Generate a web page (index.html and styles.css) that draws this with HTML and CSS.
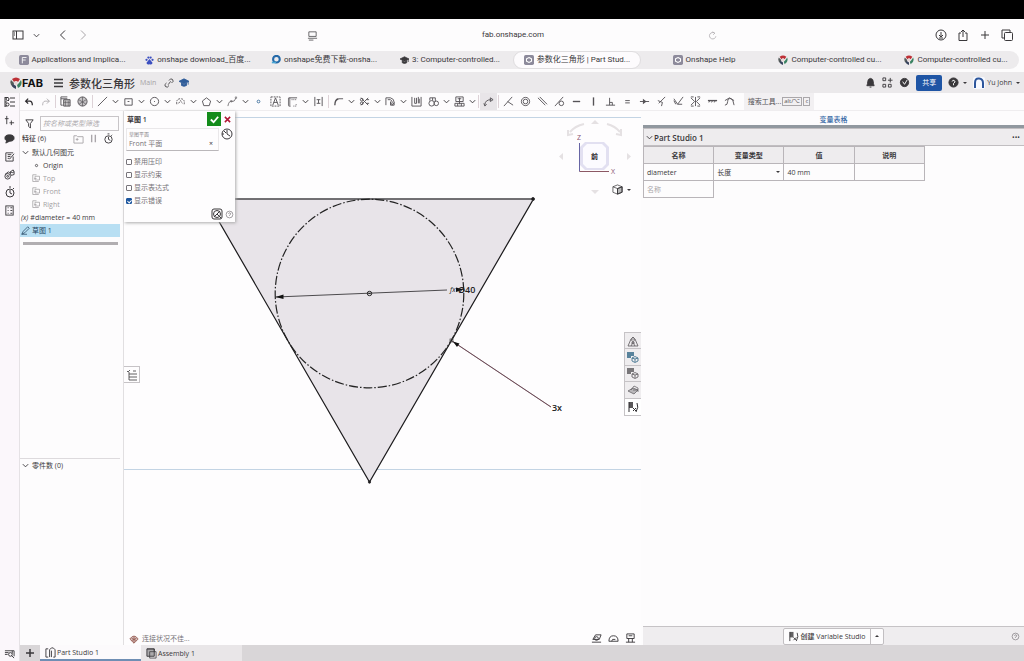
FILE: index.html
```html
<!DOCTYPE html>
<html lang="zh-CN">
<head>
<meta charset="utf-8">
<title>参数化三角形 | Part Studio 1</title>
<link rel="stylesheet" href="styles.css">
</head>
<body>
<svg class="defs" aria-hidden="true">
  <symbol id="chev" viewBox="0 0 10 10"><path d="M2 3.500 5 6.500 8 3.500"/></symbol>
  <symbol id="tree" viewBox="0 0 12 12"><path d="M1 1.500h3M1 1v10M1 6h2M1 10h2M6 2h5M6 6h5M6 10h5M4 4l1 1"/><circle cx="3.500" cy="3" r="1.500"/><circle cx="3.500" cy="8.500" r="1.500"/></symbol>
  <symbol id="part" viewBox="0 0 12 12"><path d="M3.500 2H1v9h2.500M5 11V3l2-2h2l2 2v8H9M7 11V4"/></symbol>
  <symbol id="cube" viewBox="0 0 12 12"><path class="shade" d="M6 5l5-2v6l-5 2z"/><path d="M1 3l5-2 5 2v6l-5 2-5-2zM1 3l5 2 5-2M6 5v6" stroke-width="0.800"/></symbol>
  <symbol id="tcube" viewBox="0 0 12 12"><path class="solid" stroke="none" d="M0 1h7v4H4v2H0z"/><path d="M5 7l3-1.500L11 7v3l-3 1.500L5 10zM5 7l3 1 3-1M8 8v3" stroke-width="0.800"/></symbol>
  <symbol id="vars" viewBox="0 0 12 12"><path class="solid" stroke="none" d="M2 1h4v6H2z"/><path d="M2 1v10M10 2q2 4-1 9M6 7l3 3M9 7l-3 3"/></symbol>
  <symbol id="oicon" viewBox="0 0 12 12"><rect x="0" y="0" width="12" height="12" rx="2" fill="#8d8a9b" stroke="none"/><path d="M6 3l3 1.500v3L6 9 3 7.500v-3z" stroke="#fff" stroke-width="1.300"/></symbol>
  <symbol id="fab" viewBox="0 0 12 12"><g stroke="none"><path d="M2 2Q6-1 10 2L8 5Q6 3 4 5z" fill="#bd3036"/><path d="M1 3L4 6l-1 4Q-1 7 1 3z" fill="#555b5b"/><path d="M11 3Q13 8 8 11L7 8l2-2z" fill="#3a8262"/><path d="M3 7l3 2v3Q3 11 2 9z" fill="#39445e"/><circle cx="6" cy="6" r="1.800" fill="#e8d8d8"/></g></symbol>
  <symbol id="cap" viewBox="0 0 12 12"><path d="M0 4l6-3 6 3-6 3z" fill="currentColor"/><path d="M3 6v3q3 2 6 0V6L6 8z" fill="currentColor"/><path d="M11 4v4"/></symbol>
  <symbol id="clock" viewBox="0 0 12 12"><circle cx="6" cy="7" r="4"/><path d="M6 4v3l2 1M5 1h2M9 3l1-1"/></symbol>
  <symbol id="plane" viewBox="0 0 12 12"><path d="M1 1h5M1 1v9h8M4 3h6v5H4zM3 6h3"/></symbol>
  <symbol id="help" viewBox="0 0 12 12"><circle cx="6" cy="6" r="4.500"/><path d="M4.500 5Q5 3 7 4t-1 3v1"/></symbol>
</svg>

<div class="device-bar"></div>

<header class="browser-bar">
  <div class="group nav">
    <button aria-label="侧边栏"><svg class="i12" viewBox="0 0 12 12"><rect x="1" y="2" width="10" height="8"/><path d="M4.500 2v8M2 4h1M2 6h1"/></svg></button>
    <button aria-label="标签组"><svg class="i9"><use href="#chev"/></svg></button>
    <button class="back" aria-label="后退"><svg class="i12" viewBox="0 0 12 12"><path d="M8 1.500 3.500 6 8 10.500"/></svg></button>
    <button class="dim" aria-label="前进"><svg class="i12" viewBox="0 0 12 12"><path d="M4 1.500 8.500 6 4 10.500"/></svg></button>
  </div>
  <div class="address">
    <svg class="i11" viewBox="0 0 12 12"><path d="M2 2h8v5H2zM1 9h10M2 11h5" stroke-width="0.800"/></svg>
    <span>fab.onshape.com</span>
    <button class="dim" aria-label="重新载入"><svg class="i9" viewBox="0 0 12 12"><path d="M9 3a4.300 4.300 0 1 0 1.500 4M6 1l3 2-2 2"/></svg></button>
  </div>
  <div class="group actions">
    <button aria-label="下载"><svg class="i12" viewBox="0 0 12 12"><circle cx="6" cy="6" r="5"/><path d="M6 3v5M4 6l2 2 2-2M4 9h4"/></svg></button>
    <button aria-label="共享网页"><svg class="i12" viewBox="0 0 12 12"><path d="M4 4H2v7.500h8V4H8M6 8V1M4 3l2-2 2 2"/></svg></button>
    <button aria-label="新标签"><svg class="i12" viewBox="0 0 12 12"><path d="M6 2v8M2 6h8"/></svg></button>
    <button aria-label="标签概览"><svg class="i12" viewBox="0 0 12 12"><rect x="3.500" y="3.500" width="8" height="8" rx="1"/><path d="M3 9H1V1h8v2"/></svg></button>
  </div>
</header>

<nav class="tabs" aria-label="浏览器标签">
  <a href="#t1"><svg class="i10" viewBox="0 0 12 12"><rect width="12" height="12" rx="2" fill="#8d8a9b" stroke="none"/><path d="M4 10V3h5M4 6h4" stroke="#fff"/></svg><span>Applications and Implica...</span></a>
  <a href="#t2"><svg class="i9" viewBox="0 0 12 12"><g fill="#3c4fc0" stroke="none"><circle cx="2" cy="5" r="1.500"/><circle cx="4.500" cy="2" r="1.500"/><circle cx="7.500" cy="2" r="1.500"/><circle cx="10" cy="5" r="1.500"/><path d="M6 4l4 5q0 3-4 2-4 1-4-2z"/></g></svg><span>onshape download_百度...</span></a>
  <a href="#t3"><svg class="i10" viewBox="0 0 12 12"><circle cx="6.500" cy="5" r="4" stroke="#2469a8" stroke-width="2.500"/><path d="M1 8h5v2H1z" fill="#49a6d5" stroke="none"/></svg><span>onshape免费下载-onsha...</span></a>
  <a href="#t4"><svg class="i9"><use href="#cap"/></svg><span>3: Computer-controlled...</span></a>
  <a href="#t5" class="active"><svg class="i10"><use href="#oicon"/></svg><span>参数化三角形 | Part Stud...</span></a>
  <a href="#t6"><svg class="i10"><use href="#oicon"/></svg><span>Onshape Help</span></a>
  <a href="#t7"><svg class="i10"><use href="#fab"/></svg><span>Computer-controlled cu...</span></a>
  <a href="#t8"><svg class="i10"><use href="#fab"/></svg><span>Computer-controlled cu...</span></a>
</nav>

<header class="appbar">
  <div class="brand"><svg class="i12"><use href="#fab"/></svg><b>FAB</b></div>
  <button aria-label="菜单"><svg class="i12 bold" viewBox="0 0 12 12"><path d="M2 2.500h9M2 6h9M2 9.500h9"/></svg></button>
  <h1>参数化三角形</h1>
  <span class="branch">Main</span>
  <button aria-label="链接"><svg class="i10" viewBox="0 0 12 12"><path d="M5 8 8 4M6 3l2-2q3 0 3 3L9 6M3 6 1 8q0 3 3 3l2-2"/></svg></button>
  <a class="learn" href="#learn" aria-label="学习中心"><svg class="i10"><use href="#cap"/></svg></a>
  <div class="account">
    <button aria-label="通知"><svg class="i11" viewBox="0 0 12 12"><path d="M2 9.500q1-2 1-4.500 0-3 3-3.500 3 .5 3 3.500 0 2.500 1 4.500zM5 11h2" fill="currentColor"/></svg></button>
    <button aria-label="应用"><svg class="i11" viewBox="0 0 12 12"><path d="M1 1h3v3H1zM1 8h3v3H1zM7 8h3v3H7zM9 1v5M6.500 3.500h5"/></svg></button>
    <button aria-label="导航"><svg class="i11" viewBox="0 0 12 12"><circle cx="6" cy="6" r="4.500" fill="currentColor"/><path d="M4 5l2 3 3-5" stroke="#fff"/></svg></button>
    <button class="share">共享</button>
    <button aria-label="帮助"><svg class="i11" viewBox="0 0 12 12"><circle cx="6" cy="6" r="5" fill="currentColor"/><path d="M4.500 5Q5 2.500 7 4t-1 3v2" stroke="#fff"/></svg></button>
    <span class="caret"></span>
    <button class="user"><svg class="i12" viewBox="0 0 12 12"><rect width="12" height="12" rx="2" fill="#f7f9ff" stroke="none"/><path d="M2 11V6Q2 1 6 1.500T10 6v5" stroke="#2c559c" stroke-width="2"/></svg><span>Yu John</span></button>
    <span class="caret"></span>
  </div>
</header>

<div class="workspace">
  <aside class="rail" aria-label="侧栏">
    <button aria-label="特征列表"><svg class="i12"><use href="#tree"/></svg></button>
    <button aria-label="添加"><svg class="i11" viewBox="0 0 12 12"><path d="M3 1v9M1 4h4M8 6v5M6 8.500h5"/></svg></button>
    <button aria-label="评论"><svg class="i11" viewBox="0 0 12 12"><ellipse cx="6" cy="5.500" rx="5" ry="3.500" fill="currentColor"/><path d="M3 8l-1 3 4-2" fill="currentColor"/></svg></button>
    <button aria-label="笔记"><svg class="i11" viewBox="0 0 12 12"><path d="M10 6v5H2V2h8M4 4h4M4 6h3M4 8h2M6 9l5-6"/></svg></button>
    <button aria-label="零件"><svg class="i11" viewBox="0 0 12 12"><circle cx="4" cy="8" r="3"/><circle cx="4" cy="8" r="1"/><path d="M1 6l4-3 2 2M7 3l3-2 1 2v3L8 7 7 5zM7 3l2 1 2-1"/></svg></button>
    <button aria-label="历史"><svg class="i12"><use href="#clock"/></svg></button>
    <button aria-label="表格"><svg class="i11" viewBox="0 0 12 12"><rect x="2" y="1" width="8" height="10"/><path d="M4 3h1M7 3h2M4 6h1M7 6h2M4 9h1M7 9h2"/></svg></button>
    <button class="last" aria-label="标签管理"><svg class="i11" viewBox="0 0 12 12"><path d="M1 3h10v6M1 5h4M1 7h3M9 3v3M8 8l3 3"/><circle cx="7" cy="7" r="2"/></svg></button>
  </aside>

  <div class="work">
    <div class="toolbar" role="toolbar" aria-label="草图工具">
      <button class="strong" aria-label="撤销"><svg class="i10 bold" viewBox="0 0 12 12"><path d="M5 2 2 5l3 3M2 5h5q3 0 3 5"/></svg></button>
      <button class="dim" aria-label="重做"><svg class="i10" viewBox="0 0 12 12"><path d="M7 2l3 3-3 3M10 5H5Q2 5 2 10"/></svg></button>
      <i class="sep"></i>
      <button aria-label="复制"><svg class="i11" viewBox="0 0 12 12"><path d="M8 1H1v9h2M1 3h7"/><path class="shade" d="M4 4h7v7H4z"/><path d="M6 5v6M9 5v6M4 7h7" stroke-width="0.600"/></svg></button>
      <button aria-label="材料"><svg class="i11" viewBox="0 0 12 12"><circle class="shade" cx="6" cy="6" r="5"/><path d="M6 1v10M2 4l8 5M2 9l8-5" stroke-width="0.700"/></svg></button>
      <i class="sep"></i>
      <button aria-label="直线"><svg class="i11" viewBox="0 0 12 12"><path d="M1 11 11 1"/></svg></button><button class="more" aria-label="更多直线"><svg class="i9"><use href="#chev"/></svg></button>
      <button aria-label="矩形"><svg class="i11" viewBox="0 0 12 12"><path d="M2 3h8v7H2z"/><path d="M5 6h2"/></svg></button><button class="more" aria-label="更多矩形"><svg class="i9"><use href="#chev"/></svg></button>
      <button aria-label="圆"><svg class="i11" viewBox="0 0 12 12"><circle cx="6" cy="6" r="4.500"/><path d="M5.500 6h1"/></svg></button><button class="more" aria-label="更多圆"><svg class="i9"><use href="#chev"/></svg></button>
      <button aria-label="圆弧"><svg class="i11" viewBox="0 0 12 12"><path d="M2 9Q1 3 6 3t4 6M4 8l2-3 2 3" stroke-dasharray="2 1"/></svg></button><button class="more" aria-label="更多圆弧"><svg class="i9"><use href="#chev"/></svg></button>
      <button aria-label="多边形"><svg class="i11" viewBox="0 0 12 12"><path d="M6 2l4.500 3.500L9 10.500H3L1.500 5.500z"/></svg></button><button class="more" aria-label="更多多边形"><svg class="i9"><use href="#chev"/></svg></button>
      <button aria-label="样条"><svg class="i11" viewBox="0 0 12 12"><path d="M1 11q1-6 4-5t5-4" stroke-width="0.800"/><path d="M9 1h1.500v1.500H9zM4 5h1.500v1.500H4z" stroke-width="0.600"/></svg></button><button class="more" aria-label="更多样条"><svg class="i9"><use href="#chev"/></svg></button>
      <button aria-label="点"><svg class="i11" viewBox="0 0 12 12"><circle cx="6" cy="6" r="1.500" stroke="#41719d"/></svg></button>
      <button aria-label="文字"><svg class="i11" viewBox="0 0 12 12"><rect x="1" y="1" width="10" height="10" stroke-dasharray="2 1"/><path d="M3 10 6 2l3 8M4 7h4"/></svg></button>
      <button aria-label="投影"><svg class="i11" viewBox="0 0 12 12"><path d="M11 2H2v9h2"/><path class="shade" d="M1 2h3v8H1z" stroke="none"/><path d="M5 4h5M10 9v2H6" stroke-dasharray="1 1"/></svg></button><button class="more" aria-label="更多投影"><svg class="i9"><use href="#chev"/></svg></button>
      <button aria-label="镜像"><svg class="i11" viewBox="0 0 12 12"><path d="M2 1v10M10 1v10M4 4h4M4 8h4M6 4v4"/></svg></button>
      <i class="sep"></i>
      <button aria-label="圆角"><svg class="i11" viewBox="0 0 12 12"><path class="bold" d="M2 10q0-6 4-7"/><path d="M6 3h5"/></svg></button><button class="more" aria-label="更多圆角"><svg class="i9"><use href="#chev"/></svg></button>
      <button aria-label="修剪"><svg class="i11" viewBox="0 0 12 12"><path d="M2 2l8 8M10 2 2 10"/><circle cx="3" cy="4" r="1.500"/><circle cx="3" cy="8" r="1.500"/><path d="M8 4h3M8 8h3"/></svg></button><button class="more" aria-label="更多修剪"><svg class="i9"><use href="#chev"/></svg></button>
      <button aria-label="偏移"><svg class="i11" viewBox="0 0 12 12"><path d="M1 10V2h5q4 1 4 5v3H6V6M3 4h3q2 1 2 4M6 7l2 3 2-3"/></svg></button><button class="more" aria-label="更多偏移"><svg class="i9"><use href="#chev"/></svg></button>
      <button aria-label="阵列"><svg class="i11" viewBox="0 0 12 12"><path d="M1 1v10h10V1M4 2v6h2V2M8 1v7M9 3v5"/></svg></button>
      <button aria-label="变换"><svg class="i11" viewBox="0 0 12 12"><circle cx="4" cy="8" r="3"/><circle cx="9" cy="8" r="2.500"/><path d="M2 5V2h6v4M5 2v3"/></svg></button><button class="more" aria-label="更多变换"><svg class="i9"><use href="#chev"/></svg></button>
      <button aria-label="插入"><svg class="i11" viewBox="0 0 12 12"><path d="M2 1h8v5H2zM1 8h10v3H1zM4 3h4M6 2v7M4 8v3M8 8v3"/></svg></button><button class="more" aria-label="更多插入"><svg class="i9"><use href="#chev"/></svg></button>
      <i class="sep"></i>
      <button class="selected" aria-label="尺寸"><svg class="i11" viewBox="0 0 12 12"><path d="M2 10q0-6 7-6M1 8l1 3 2-2M8 2l3 2-3 2z"/></svg></button>
      <i class="sep"></i>
      <button aria-label="重合"><svg class="i11" viewBox="0 0 12 12"><path d="M1 11 10 1M5 6l6 4"/></svg></button>
      <button aria-label="同心"><svg class="i11" viewBox="0 0 12 12"><circle cx="6" cy="6" r="4.500"/><circle cx="6" cy="6" r="2.500"/></svg></button>
      <button aria-label="平行"><svg class="i11" viewBox="0 0 12 12"><path d="M1 2l8 8M3 1l8 8"/></svg></button>
      <button aria-label="相切"><svg class="i11" viewBox="0 0 12 12"><path d="M1 11 10 1"/><circle cx="8" cy="8" r="2.500"/></svg></button>
      <button aria-label="水平"><svg class="i11" viewBox="0 0 12 12"><path class="bold" d="M2 6h8"/></svg></button>
      <button aria-label="竖直"><svg class="i11" viewBox="0 0 12 12"><path class="bold" d="M6 1.500v9"/></svg></button>
      <button aria-label="垂直"><svg class="i11" viewBox="0 0 12 12"><path d="M1 10h10M5 2v8M5 7h3v3"/></svg></button>
      <button aria-label="相等"><svg class="i11" viewBox="0 0 12 12"><path d="M3.500 5h5M3.500 7.500h5"/></svg></button>
      <button aria-label="中点"><svg class="i11" viewBox="0 0 12 12"><path d="M1 6h10"/><path class="bold" d="M5 4.500v3L7 6z"/></svg></button>
      <button aria-label="垂直约束"><svg class="i11" viewBox="0 0 12 12"><path d="M10 1 3 8M2 5l5 2-1 4"/></svg></button>
      <button aria-label="穿透"><svg class="i11" viewBox="0 0 12 12"><path d="M1 3l4 6 6-8M5 9h5M1 5l2 4"/></svg></button>
      <button aria-label="对称"><svg class="i11" viewBox="0 0 12 12"><path d="M6 1v10M1 2l4 4-4 4M11 2 7 6l4 4M1 1h3M8 1h3M1 11h3M8 11h3"/></svg></button>
      <button aria-label="固定"><svg class="i11" viewBox="0 0 12 12"><path class="bold" d="M1 5h10"/><path d="M3 5 2 7M6 5 5 7M9 5 8 7"/></svg></button>
      <button aria-label="曲率"><svg class="i11" viewBox="0 0 12 12"><path d="M1 10q3 0 3-4t4-3q2 1 3 7M1 5l5-3 5 3"/></svg></button>
      <button class="search">搜索工具... <kbd>alt/⌥</kbd><kbd>c</kbd></button>
    </div>

    <div class="body">
      <section class="features" aria-label="特征">
        <div class="filter">
          <svg class="i11" viewBox="0 0 12 12"><path d="M2 2h8L7 6v5L5 9V6z"/></svg>
          <input aria-label="筛选" placeholder="按名称或类型筛选">
        </div>
        <div class="heading">
          <span>特征 (6)</span>
          <button class="dim" aria-label="文件夹"><svg class="i11" viewBox="0 0 12 12"><path d="M1 3h3l1 1h6v7H1zM3 7h3M4.500 5.500v3"/></svg></button>
          <button class="dim" aria-label="暂停"><svg class="i11" viewBox="0 0 12 12"><path class="bold" d="M4 2v8M8 2v8"/></svg></button>
          <button aria-label="时间"><svg class="i11"><use href="#clock"/></svg></button>
        </div>
        <ul class="list">
          <li><svg class="i9"><use href="#chev"/></svg><span>默认几何图元</span></li>
          <li class="child dark"><svg class="i9" viewBox="0 0 12 12"><circle cx="6" cy="6" r="1.500"/></svg><span>Origin</span></li>
          <li class="child"><svg class="i9"><use href="#plane"/></svg><span>Top</span></li>
          <li class="child"><svg class="i9"><use href="#plane"/></svg><span>Front</span></li>
          <li class="child"><svg class="i9"><use href="#plane"/></svg><span>Right</span></li>
          <li><i class="fx">(x)</i><span>#diameter = 40 mm</span></li>
          <li class="current"><svg class="i9" viewBox="0 0 12 12"><path d="M1 11l2-4 6-6 2 2-6 6zM1 11h7"/></svg><span>草图 1</span></li>
        </ul>
        <div class="rollback"></div>
        <div class="parts"><svg class="i9"><use href="#chev"/></svg><span>零件数 (0)</span></div>
      </section>

      <main class="canvas">
        <svg class="drawing" viewBox="124 111 517 534" role="img" aria-label="草图">
          <path d="M124 117.500H641M124 469.500H641" stroke="#c3d4e4"/>
          <path d="M206 199H533.500L369.500 482Z" fill="#e8e4e9" stroke="#1c1b1d" stroke-width="1.200"/>
          <path d="M206 199H533" stroke="#6a686c" stroke-width="1.500"/>
          <circle cx="369.500" cy="293.500" r="94.300" stroke="#222" stroke-width="1.200" stroke-dasharray="9 2 1.500 2"/>
          <path d="M276 297 447 290M452 341 551 407" stroke="#252326" stroke-width="0.800"/>
          <path d="M452 341 551 407" stroke="#8a3c54" stroke-width="0.500"/>
          <path d="M275.500 297l8-2.500v4.500zM453 341.500l6.500 2-2.500 3.500zM464 289.500l-8-2v4.500z" fill="#111" stroke="none"/>
          <circle cx="369.500" cy="293.500" r="2.200" stroke="#222"/><path d="M368.500 293.500h2" stroke="#222"/>
          <circle cx="533" cy="199" r="1.500" fill="#111"/><circle cx="369.500" cy="482" r="1.200" fill="#111"/>
          <rect x="450" y="339" width="3" height="3" stroke="#444" stroke-width="0.700"/>
          <text x="450" y="292" class="func">fx</text>
          <text x="458" y="293" class="dim-text">Ø40</text>
          <text x="552" y="411" class="dim-text">3x</text>
        </svg>

        <svg class="viewcube" viewBox="555 116 80 80" role="img" aria-label="视图方向">
          <g fill="#e5e1e3" stroke="none"><path d="M591 124l4-4 4 4zM591 190l4 4 4-4zM563 153v7l-4-3.500zM627 153v7l4-3.500z"/></g>
          <path d="M570 132q5-6 14-8M607 124q8 2 13 8M568 130v5l5-1M621 129v6l-5-1" stroke="#e5e1e3" stroke-width="2"/>
          <path d="M585 142h19l5 5v18l-5 5h-19l-5-5v-18z" fill="#e2e0f1" stroke="none"/>
          <path d="M587 144h15l4 4v16l-4 4h-15l-4-4v-16z" fill="#fcfbff" stroke="none"/>
          <path d="M579.500 143v28.500" stroke="#6765a5"/><path d="M579.500 171.500H609" stroke="#8c5864"/>
          <text x="577" y="140">Z</text><text x="611" y="174">X</text>
          <text x="591" y="159" class="face">前</text>
        </svg>
        <button class="display" aria-label="显示样式"><svg class="i11"><use href="#cube"/></svg><span class="caret"></span></button>

        <form class="dialog" onsubmit="return false">
          <div class="dialog-head"><b>草图 1</b>
            <button class="ok" aria-label="确定"><svg class="i11" viewBox="0 0 12 12"><path d="M2 6l3 3 5-6"/></svg></button>
            <button class="cancel" aria-label="取消"><svg class="i9" viewBox="0 0 12 12"><path d="M2.500 2.500l7 7M9.500 2.500l-7 7"/></svg></button>
          </div>
          <div class="plane-row">
            <div class="field"><label for="plane-name">草图平面</label>
              <div class="value"><input id="plane-name" value="Front 平面"><button aria-label="清除">×</button></div></div>
            <button aria-label="历史"><svg class="i12" viewBox="0 0 12 12"><circle cx="6" cy="6" r="5"/><path d="M6 2v4l3 2M1 6h2M3 3l2 2"/></svg></button>
          </div>
          <label class="check"><input type="checkbox">禁用压印</label>
          <label class="check"><input type="checkbox">显示约束</label>
          <label class="check"><input type="checkbox">显示表达式</label>
          <label class="check"><input type="checkbox" checked>显示错误</label>
          <div class="dialog-foot">
            <button aria-label="最终"><svg class="i12" viewBox="0 0 12 12"><rect x="1" y="1" width="10" height="10" rx="2"/><circle cx="6" cy="6" r="3.500"/><path d="M3 9 9 3M6 6l4 4"/></svg></button>
            <button class="mid" aria-label="帮助"><svg class="i9"><use href="#help"/></svg></button>
          </div>
        </form>

        <button class="flyout" aria-label="列表"><svg class="i12" viewBox="0 0 12 12"><path d="M3 3v8h8M3 5h8M3 8h8M1 2l1 1 2-2M7 2h3" stroke-width="0.800"/></svg></button>

        <div class="panel-strip">
          <button aria-label="外观"><svg class="i12" viewBox="0 0 12 12"><path d="M1 11l3-7 2-2 2 2 3 7zM4 4l4 7M8 4l-4 7M4 8h4M6 2v3" stroke-width="0.800"/></svg></button>
          <button aria-label="配置" class="blue"><svg class="i12"><use href="#tcube"/></svg></button>
          <button aria-label="自定义表格"><svg class="i12"><use href="#tcube"/></svg></button>
          <button aria-label="属性"><svg class="i12" viewBox="0 0 12 12"><path class="shade" stroke="none" d="M1 7l5-3 5 2-4 4z"/><path d="M1 7l5-3 5 2-4 4zM4 6l3-4 4 2v4M6 6h5" stroke-width="0.700"/></svg></button>
          <button aria-label="变量表" class="on"><svg class="i12"><use href="#vars"/></svg></button>
        </div>

        <div class="warning"><svg class="i10" viewBox="0 0 12 12"><path class="shade" d="M1 6q5-7 10 0L6 11z"/><path d="M6 3v8M3 5l6 3M9 5 3 8"/></svg><span>连接状况不佳...</span></div>
        <div class="measure">
          <button aria-label="测量"><svg class="i11" viewBox="0 0 12 12"><path d="M1 10h10M2 7h7l2-5H5z"/><circle cx="6" cy="6" r="2"/></svg></button>
          <button aria-label="性能"><svg class="i11" viewBox="0 0 12 12"><path d="M1 9q0-6 5-6t5 6zM4 9q0-3 4-2"/></svg></button>
          <button aria-label="质量"><svg class="i11" viewBox="0 0 12 12"><path d="M2 1h8v5H2zM1 10h10M4 6v4M8 6v4M4 3h4"/></svg></button>
        </div>
      </main>

      <section class="variables">
        <h2>变量表格</h2>
        <div class="studio"><svg class="i9"><use href="#chev"/></svg><b>Part Studio 1</b><button aria-label="更多">•••</button></div>
        <table>
          <thead><tr><th>名称</th><th>变量类型</th><th>值</th><th>说明</th></tr></thead>
          <tbody>
            <tr><td>diameter</td><td><div class="pick"><select aria-label="变量类型"><option>长度</option></select><span class="caret"></span></div></td><td>40 mm</td><td></td></tr>
            <tr><td class="new"><input aria-label="名称" placeholder="名称"></td></tr>
          </tbody>
        </table>
        <footer>
          <div class="split"><button><svg class="i11"><use href="#vars"/></svg><span>创建 Variable Studio</span></button><button aria-label="更多选项"><span class="caret up"></span></button></div>
          <button class="mid" aria-label="帮助"><svg class="i9"><use href="#help"/></svg></button>
        </footer>
      </section>
    </div>

    <nav class="doc-tabs" aria-label="文档标签">
      <button aria-label="添加标签"><svg class="i12 bold" viewBox="0 0 12 12"><path d="M6 2v8M2 6h8"/></svg></button>
      <a href="#part" class="active"><svg class="i11"><use href="#part"/></svg><span>Part Studio 1</span></a>
      <a href="#assembly"><svg class="i11" viewBox="0 0 12 12"><path class="shade" d="M1 1h8v8H1z"/><path d="M4 4h7v7H4zM1 1h8v3" stroke-width="0.800"/></svg><span>Assembly 1</span></a>
    </nav>
  </div>
</div>
</body>
</html>
```
FILE: styles.css
```css
* { box-sizing: border-box; }

body {
  margin: 0;
  height: 100vh;
  display: flex;
  flex-direction: column;
  overflow: hidden;
  background: #fdfcfd;
  color: #3a383b;
  font: 7px/13px "Open Sans", "Noto Sans CJK SC", sans-serif;
}

button, input, select {
  margin: 0;
  padding: 0;
  border: 0;
  background: none;
  color: inherit;
  font: inherit;
}

button, a {
  display: flex;
  align-items: center;
  justify-content: center;
  color: inherit;
  text-decoration: none;
}

span, b, label { white-space: nowrap; }

svg {
  flex: none;
  fill: none;
  stroke: currentColor;
  stroke-width: 1;
}

.defs { position: absolute; width: 0; height: 0; }
.i9 { width: 9px; height: 9px; }
.i10 { width: 10px; height: 10px; }
.i11 { width: 11px; height: 11px; }
.i12 { width: 12px; height: 12px; }
.bold { stroke-width: 1.5; }
.shade { fill: currentColor; fill-opacity: 0.35; }
.solid { fill: currentColor; fill-opacity: 0.8; }
.dim { color: #aaa6aa; }
.mid { color: #858286; }

.caret {
  flex: none;
  width: 4px;
  border: 2px solid transparent;
  border-top-color: currentColor;
  border-bottom: 0;
}
.caret.up {
  border-bottom: 2px solid currentColor;
  border-top: 0;
}

/* Browser chrome */
.device-bar { flex: none; height: 19px; background: #000; }

.browser-bar {
  flex: none;
  height: 32px;
  display: grid;
  grid-template-columns: 1fr 410px 1fr;
  align-items: center;
  font: 8px/12px Roboto, sans-serif;
}
.group { display: flex; align-items: center; }
.nav { gap: 8px; padding-left: 12px; }
.nav .back { margin-left: 8px; }
.actions { gap: 10px; padding-right: 11px; justify-content: flex-end; }
.address { display: flex; align-items: center; justify-content: space-between; }

.tabs {
  flex: none;
  height: 18px;
  margin: 0 5px 3px;
  padding-left: 4px;
  display: flex;
  border-radius: 9px;
  background: #edebed;
  font: 8px/18px Roboto, "Noto Sans CJK SC", sans-serif;
}
.tabs a { flex: 1 1 0; min-width: 0; gap: 3px; }
.tabs .active {
  border: 1px solid #dfdddf;
  border-radius: 9px;
  background: #fdfbfd;
}

/* Document header */
.appbar {
  flex: none;
  height: 21px;
  padding: 0 4px 0 10px;
  display: flex;
  align-items: center;
  gap: 5px;
  background: #ebe9eb;
}
.brand {
  display: flex;
  align-items: center;
  margin-right: 4px;
  color: #111;
  font: 11px/14px Inter, sans-serif;
}
.appbar h1 { margin: 0; font: 500 11px/16px "Noto Sans CJK SC", sans-serif; }
.branch { margin-right: 3px; color: #a5a2a5; }
.learn { color: #2f5c99; }
.account { display: flex; align-items: center; gap: 6px; margin-left: auto; }
.share {
  width: 26px;
  height: 16px;
  border-radius: 2px;
  background: #1f55a5;
  color: #fff;
}
.account .caret { margin-left: -2px; }
.user { gap: 2px; }

/* Workspace */
.workspace { flex: 1; min-height: 0; display: flex; }

.rail {
  flex: none;
  width: 20px;
  padding: 3px 0 2px;
  display: flex;
  flex-direction: column;
  align-items: center;
  gap: 6px;
  background: #fbf7fb;
  border-right: 1px solid #e5e2e5;
}
.rail button { height: 12px; }
.rail .last { margin-top: auto; }

.work { flex: 1; min-width: 0; display: flex; flex-direction: column; }

.toolbar {
  flex: none;
  height: 18px;
  display: flex;
  border-bottom: 1px solid #efedef;
  color: #555256;
}
.toolbar button { flex: none; width: 17px; }
.toolbar .dim { color: #aaa6aa; }
.toolbar .strong { color: #2b292c; }
.toolbar .more { width: 9px; color: #333134; }
.toolbar .sep { flex: none; width: 1px; margin: 2px 1px; background: #ddd2d7; }
.toolbar .selected { background: #e8e5e8; }
.toolbar .search {
  width: 70px;
  margin-left: 6px;
  background: #f2f0f2;
}
kbd {
  padding: 0 1px;
  margin-left: 1px;
  border: 1px solid #aaa7aa;
  font: 6px/7px "Open Sans", sans-serif;
}

.body { flex: 1; min-height: 0; display: flex; }

.features {
  flex: none;
  width: 104px;
  display: flex;
  flex-direction: column;
  border-right: 1px solid #e1dfe1;
}
.filter { display: flex; align-items: center; gap: 5px; padding: 5px 4px 0 4px; }
.filter input {
  flex: 1;
  min-width: 0;
  height: 15px;
  padding: 0 2px;
  border: 1px solid #c8c5c8;
  font-style: italic;
}
::placeholder { color: #aaa7aa; opacity: 1; }
.heading { display: flex; align-items: center; gap: 4px; padding: 1px 9px 1px 2px; }
.heading span { flex: 1; font-weight: 500; }
.list { margin: 0; padding: 0 3px 0 0; list-style: none; }
.list li { height: 13px; display: flex; align-items: center; gap: 2px; padding-left: 1px; }
.list .child { padding-left: 12px; color: #a3a0a3; }
.list .dark { color: #3a383b; }
.fx { font-style: italic; }
.list .current { background: #b8dff3; color: #274764; }
.rollback { height: 3px; margin: 5px 5px 0 3px; background: #b1aeb1; }
.parts {
  height: 187px;
  margin: auto 3px 0 0;
  display: flex;
  gap: 2px;
  border-top: 1px solid #dddadd;
}
.parts svg { margin: 2px 0 0 1px; }

/* Sketch canvas and its overlays */
.canvas { flex: 1; min-width: 0; position: relative; background: #fefdfe; }
.drawing { display: block; width: 100%; height: 100%; }
.drawing text { fill: #222; stroke: none; }
.dim-text { font: 600 9px "Open Sans", sans-serif; }
.func { font: italic 7px "Open Sans", sans-serif; }
.viewcube { position: absolute; top: 5px; right: 6px; width: 80px; height: 80px; }
.viewcube text { fill: #8b5572; stroke: none; font: 7px "Open Sans", sans-serif; }
.viewcube .face { fill: #252326; font: 700 7px "Noto Sans CJK SC", sans-serif; }
.display { position: absolute; top: 73px; right: 10px; gap: 4px; }

.dialog {
  position: absolute;
  top: 0;
  left: 0;
  width: 111px;
  padding-bottom: 2px;
  background: #fefdfe;
  box-shadow: 1px 1px 3px #aaa;
}
.dialog-head { display: flex; align-items: center; gap: 2px; padding: 1px 3px 1px 3px; }
.dialog-head b { flex: 1; font-weight: 600; }
.ok { width: 14px; height: 14px; background: #138c1b; color: #fff; }
.ok svg { stroke-width: 2; }
.cancel { color: #b01634; }
.cancel svg { stroke-width: 2; }
.plane-row { display: flex; align-items: flex-start; gap: 2px; padding: 1px 2px 0; }
.field {
  flex: 1;
  min-width: 0;
  margin-bottom: 4px;
  padding: 1px 2px;
  border: 1px solid #eae8ea;
  border-bottom-color: #bab7ba;
}
.field label { display: block; font-size: 5px; line-height: 8px; color: #888588; }
.value { display: flex; justify-content: space-between; line-height: 11px; }
.value input { flex: 1; min-width: 0; height: 11px; color: #777478; }
.value button { width: 10px; }
.check { display: flex; align-items: center; gap: 2px; height: 13px; padding-left: 2px; color: #777478; }
.check input {
  appearance: none;
  width: 6px;
  height: 6px;
  border: 1px solid #77747a;
  border-radius: 1px;
}
.check input:checked { background: #1d569e; border-color: #1d569e; }
.check input:checked::after {
  content: "";
  display: block;
  width: 2px;
  height: 3px;
  margin-left: 1px;
  border: solid #fff;
  border-width: 0 1px 1px 0;
  rotate: 45deg;
}
.dialog-foot { display: flex; justify-content: flex-end; gap: 2px; padding: 1px 1px 0; }

.flyout {
  position: absolute;
  top: 255px;
  left: 0;
  width: 16px;
  height: 17px;
  border: 1px solid #c6c3c6;
  border-left: 0;
}
.panel-strip {
  position: absolute;
  top: 221px;
  right: 0;
  width: 17px;
  height: 84px;
  display: grid;
  grid-auto-rows: 1fr;
  border: 1px solid #c6c3c6;
  border-right: 0;
  background: #efedef;
  color: #5a575b;
}
.panel-strip button { border-bottom: 1px solid #c6c3c6; }
.panel-strip button:last-child { border-bottom: 0; }
.panel-strip .blue { color: #326887; }
.panel-strip .on { background: #fff; color: #2f2d30; }
.warning { position: absolute; left: 5px; bottom: 0; display: flex; align-items: center; gap: 3px; color: #777478; }
.warning svg { color: #955a50; }
.measure { position: absolute; right: 5px; bottom: 1px; display: flex; gap: 6px; }

/* Variable table */
.variables { flex: none; width: 38.15%; min-width: 0; display: flex; flex-direction: column; padding-left: 2px; }
.variables h2 {
  margin: 0;
  padding-top: 2px;
  border-bottom: 3px solid #91989f;
  color: #3567a5;
  font: 500 7px/12px "Noto Sans CJK SC", sans-serif;
  text-align: center;
}
.studio {
  height: 18px;
  padding: 0 4px 0 1px;
  display: flex;
  align-items: center;
  border: 1px solid #c1bec1;
  border-right: 0;
  background: #eeecee;
}
.studio b { flex: 1; font-size: 8px; font-weight: 600; }
table { width: 74%; table-layout: fixed; border-collapse: collapse; }
th, td { height: 17px; padding: 0 3px; border: 1px solid #b9b5b9; text-align: left; }
th { background: #eeecee; text-align: center; font-weight: 700; }
.new { color: #aaa7aa; }
td input { width: 100%; height: 13px; display: block; }
.pick { display: flex; align-items: center; }
.pick select { flex: 1; min-width: 0; height: 13px; appearance: none; }
.variables footer {
  height: 19px;
  margin-top: auto;
  padding: 0 4px;
  display: grid;
  grid-template-columns: 1fr auto 1fr;
  align-items: center;
  border-top: 1px solid #c6c3c6;
  background: #efedef;
}
.split { grid-column: 2; display: flex; height: 17px; border: 1px solid #c2bfc2; border-radius: 2px; background: #fdfcfd; }
.split button { padding: 0 4px; gap: 1px; font-weight: 500; }
.split button + button { border-left: 1px solid #c2bfc2; }
footer > .mid { justify-self: end; }

.doc-tabs { flex: none; height: 16px; display: flex; background: #d9d6d8; }
.doc-tabs button { width: 20px; }
.doc-tabs a { width: 101px; gap: 1px; padding: 0 5px; justify-content: flex-start; background: #e9e6e8; }
.doc-tabs .active { background: #fcfafc; border-bottom: 2px solid #6f8eb4; }
```
